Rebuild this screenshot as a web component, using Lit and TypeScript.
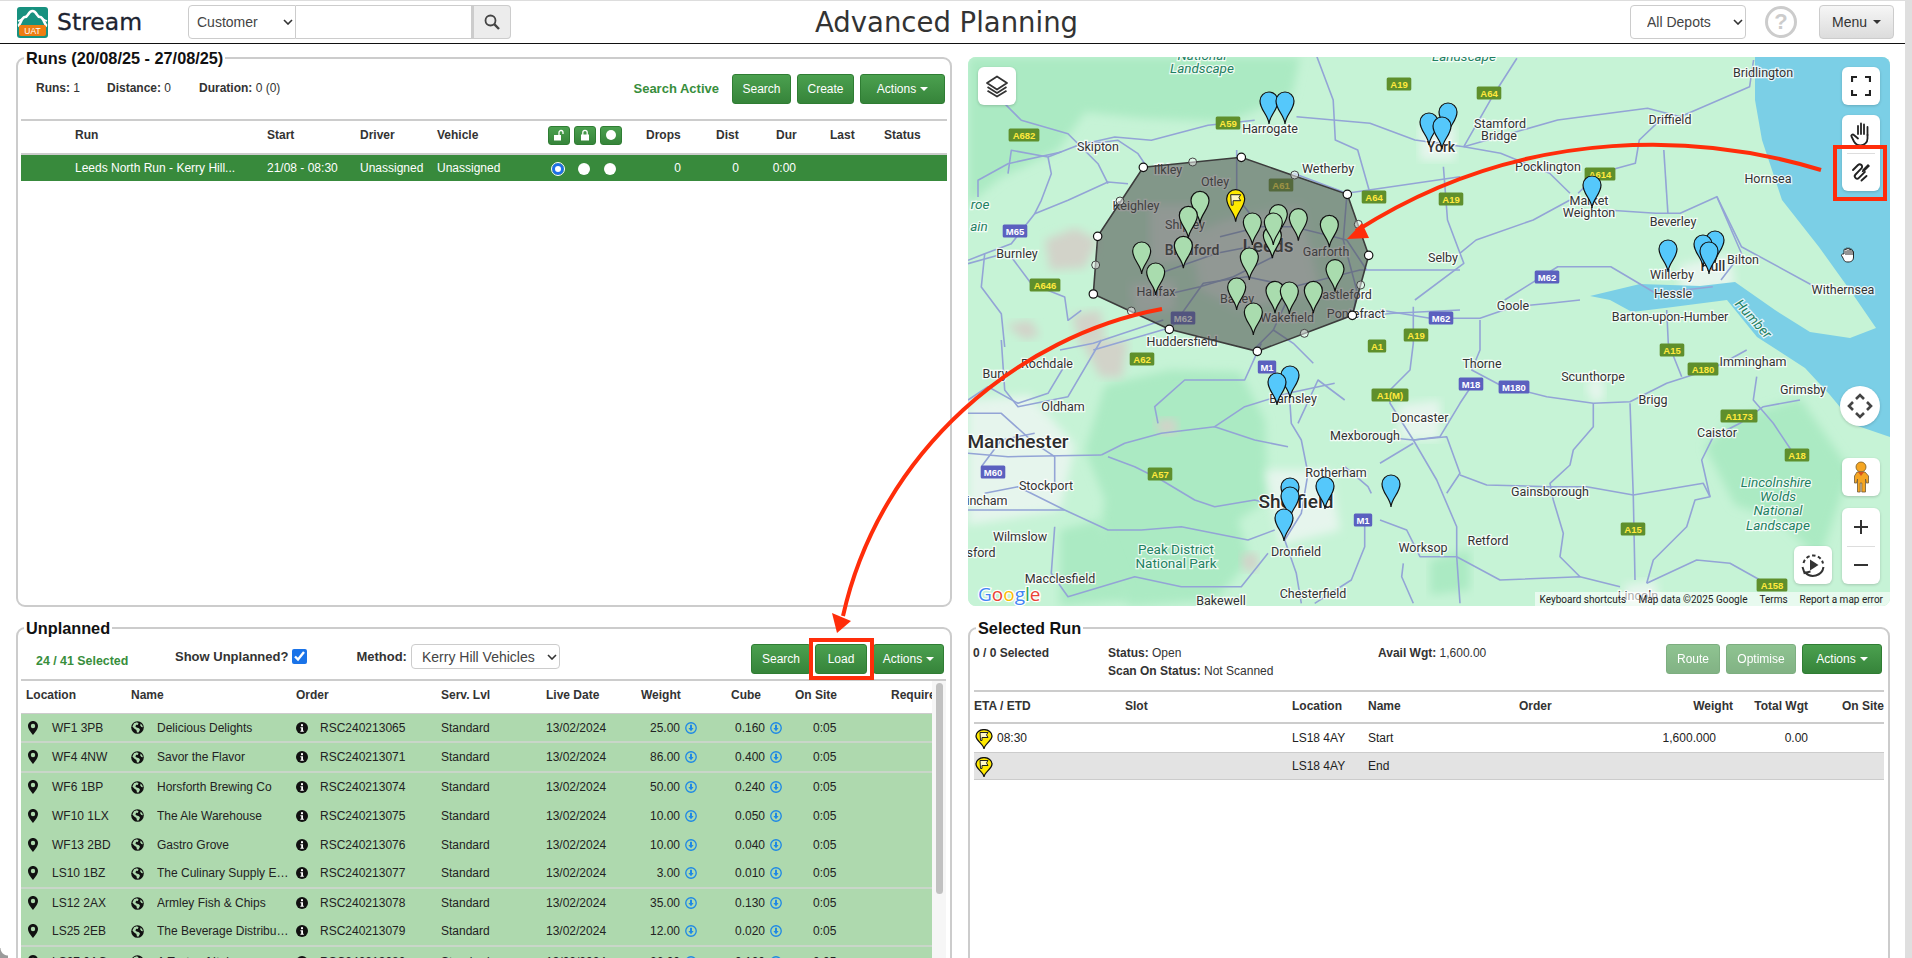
import { LitElement, html, svg, css } from "lit";
import { customElement } from "lit/decorators.js";

type Pt = [number, number];
const z = (ox: number, oy: number, sx: number, sy: number, pts: Pt[]) =>
  pts.map(([x, y]) => `${(ox + x / sx).toFixed(1)},${(oy + y / sy).toFixed(1)}`).join(" ");
const z3 = (p: Pt[]) => z(1272, 0, 2.45, 3, p);
const z7 = (p: Pt[]) => z(1060, 130, 3, 3, p);
const z9 = (p: Pt[]) => z(968, 340, 3, 3, p);
const z10 = (p: Pt[]) => z(1380, 300, 3, 3, p);
const z12 = (p: Pt[]) => z(968, 57, 3, 3, p);

const ROADS: string[] = [
  ...([
    [[0,30],[150,55],[300,55],[400,20],[510,10],[600,0]],
    [[300,60],[300,150],[275,210],[360,255],[500,290],[640,310],[750,305],[860,250],[1000,205],[1100,150]],
    [[640,310],[640,380],[580,450],[570,495],[510,550],[520,600],[550,700],[540,770],[600,830]],
    [[750,310],[760,590],[765,840]],
    [[240,525],[320,555],[510,560],[620,560],[760,585],[970,550],[990,590],[945,600],[920,680],[820,780],[800,850]],
    [[0,410],[100,420],[180,410],[240,310],[280,250]],
    [[100,420],[170,540],[230,680],[230,770],[240,910]],
    [[0,490],[100,430]],
    [[100,420],[200,410],[240,520],[200,580]],
    [[0,660],[80,690],[120,770],[230,770],[360,840],[600,830],[720,860]],
    [[70,790],[65,830],[100,910]],
    [[800,850],[950,780],[1050,790],[1140,840]],
    [[1260,300],[1150,320],[1080,370],[1000,410],[965,480],[990,590]],
    [[1130,230],[1120,300],[1180,370],[1240,460]],
    [[860,30],[865,130],[905,230]],
    [[100,20],[100,130],[90,210],[30,270],[30,310],[100,420]],
  ] as Pt[][]).map(z10),
  ...([
    [[0,180],[60,140],[150,190],[240,160],[300,60]],
    [[400,345],[470,310],[580,280],[660,270],[740,260],[860,300],[960,320]],
    [[420,350],[500,380],[580,420],[680,480],[740,500],[860,480],[900,490]],
    [[0,340],[120,350],[400,345]],
    [[0,510],[290,510],[420,570],[520,570],[640,560],[840,600],[920,570]],
    [[260,560],[250,700],[300,770],[400,740],[500,710],[640,740],[820,740],[900,640]],
    [[740,260],[830,200],[960,160],[1100,130]],
    [[960,100],[970,250],[1000,300],[1020,400]],
    [[990,250],[1050,120],[1130,180]],
    [[1130,380],[1200,440],[1210,460]],
    [[1190,540],[1190,620],[1150,720],[1040,790]],
    [[880,10],[830,120],[650,120],[560,200],[570,250]],
    [[0,220],[100,220],[200,310],[260,350],[260,440]],
    [[40,380],[100,300],[200,280]],
    [[50,460],[150,440],[290,510]],
    [[100,0],[110,150],[150,200],[300,170],[400,0]],
    [[1020,400],[1000,520],[950,600],[985,700],[1000,790]],
  ] as Pt[][]).map(z9),
  ...([
    [[100,130],[160,190],[300,230],[390,320],[420,380]],
    [[120,350],[130,280],[240,300],[330,265],[440,240],[550,250],[720,205],[860,190]],
    [[30,420],[30,370],[120,320],[280,285]],
    [[240,300],[250,350],[220,430],[200,470],[300,430],[420,375],[480,380]],
    [[200,470],[130,560],[50,590],[0,610]],
    [[0,620],[90,595]],
    [[50,590],[40,690],[100,770],[110,870]],
    [[130,600],[190,680],[290,720],[300,790],[340,760]],
    [[330,265],[450,250],[510,290],[530,320]],
  ] as Pt[][]).map(z12),
  ...([
    [[110,170],[150,300],[155,420],[210,450],[240,580]],
    [[60,350],[240,370],[350,420],[470,440],[700,360],[920,325],[1000,350]],
    [[470,440],[540,290],[600,175]],
    [[470,440],[560,460],[680,520],[730,580]],
    [[420,500],[430,660],[470,790],[350,900]],
    [[1000,350],[1170,260],[1180,180]],
    [[960,350],[900,420],[890,490],[800,520],[750,580]],
    [[820,630],[940,640],[1000,640],[1090,590],[1150,740],[1330,860]],
    [[960,450],[970,640]],
    [[730,600],[640,660],[500,720],[460,760]],
    [[570,900],[700,800],[830,800],[940,880],[1080,860]],
    [[1090,590],[1150,760],[1100,840]],
  ] as Pt[][]).map(z3),
  ...([
    [[480,320],[600,290],[700,290],[860,330],[920,420]],
    [[300,430],[470,370],[570,350]],
    [[640,380],[520,440],[420,470],[290,500]],
    [[860,200],[850,330],[890,480],[880,560]],
    [[530,60],[530,200],[600,290]],
    [[330,600],[430,460],[560,440],[700,470],[900,420],[1200,420]],
    [[100,660],[340,590]],
    [[580,660],[640,600],[700,640],[760,700]],
    [[700,470],[640,600]],
    [[880,560],[1000,550],[1200,540]],
    [[0,660],[100,640],[310,570]],
    [[700,130],[860,190],[1200,140]],
  ] as Pt[][]).map(z7),
];

const FOREST: string[] = [
  "968,57 1300,57 1292,95 1228,122 1140,118 1085,112 1058,150 1000,178 968,205",
  "1105,385 1170,370 1240,372 1265,420 1268,500 1238,520 1250,560 1215,600 1130,606 1095,560 1105,500 1085,450",
  "1705,447 1730,420 1800,398 1850,470 1820,560 1780,520 1735,505",
  "1060,530 1100,520 1130,600 1060,606",
  "1430,560 1470,550 1470,590 1430,595",
];
const URBAN: string[] = [
  "968,400 1030,395 1075,445 1060,510 968,525",
  "1225,220 1300,205 1320,290 1240,310 1200,290 1190,235",
  "1150,205 1195,205 1195,260 1150,265",
  "1130,285 1175,280 1175,310 1135,315",
  "1265,470 1330,470 1340,530 1280,545",
  "1420,125 1455,125 1455,160 1420,160",
  "1680,265 1730,255 1735,285 1680,295",
  "1398,405 1440,400 1440,440 1400,440",
  "1600,375 1605,395 1595,405 1585,385",
  "1625,585 1655,580 1660,606 1625,606",
];
const MOOR: string[] = [
  "1045,240 1075,228 1098,240 1085,268 1050,270",
  "1006,325 1030,320 1040,335 1025,340",
  "1072,315 1100,310 1105,340 1080,345",
  "1081,340 1128,340 1122,378 1100,377",
  "1155,420 1175,418 1178,433 1160,435",
  "1240,555 1258,552 1258,570 1245,572",
];

const LABELS: [string, number, number, string?][] = [
  ["Skipton",1098,146],["Ilkley",1168,169],["Otley",1215,181],["Keighley",1136,205],["Shipley",1185,224],
  ["Bradford",1192,250,"m"],["Burnley",1017,253],["Halifax",1156,291],["Harrogate",1270,128],["Leeds",1268,247,"b"],
  ["Wetherby",1328,168],["Garforth",1326,251],["Batley",1237,298],["Wakefield",1287,317],["Castleford",1343,294],
  ["Pontefract",1356,313],["Huddersfield",1182,341],["Selby",1443,257],["York",1441,147,"m"],["Stamford",1500,123],
  ["Bridge",1499,135],["Driffield",1670,119],["Bridlington",1763,72],["Pocklington",1548,166],["Market",1589,200],
  ["Weighton",1589,212],["Hornsea",1768,178],["Beverley",1673,221],["Bilton",1743,259],["Hull",1713,266,"m"],
  ["Willerby",1672,274],["Hessle",1673,293],["Withernsea",1843,289],["Barton-upon-Humber",1670,316],["Goole",1513,305],
  ["Thorne",1482,363],["Scunthorpe",1593,376],["Immingham",1753,361],["Brigg",1653,399],["Grimsby",1803,389],
  ["Caistor",1717,432],["Doncaster",1420,417],["Gainsborough",1550,491],["Worksop",1423,547],["Retford",1488,540],
  ["Lincoln",1638,595],["Rochdale",1047,363],["Bury",995,373],["Oldham",1063,406],["Manchester",1018,443,"b"],
  ["Stockport",1046,485],["incham",987,500],["Wilmslow",1020,536],["sford",981,552],["Macclesfield",1060,578],
  ["Barnsley",1293,398],["Mexborough",1365,435],["Rotherham",1336,472],["Sheffield",1296,503,"b"],["Dronfield",1296,551],
  ["Chesterfield",1313,593],["Bakewell",1221,600],
];
const PARKS: [string, number, number, string][] = [
  ["Peak District",1176,549,"park"],["National Park",1176,563,"park"],
  ["Landscape",1202,68,"parki"],["National",1202,55,"parki"],["Landscape",1464,56,"parki"],
  ["Lincolnshire",1776,482,"parki"],["Wolds",1778,496,"parki"],["National",1778,510,"parki"],["Landscape",1778,525,"parki"],
  ["roe",980,204,"parki"],["ain",979,226,"parki"],
];
const SHIELDS: [string, number, number][] = [
  ["A682",1024,135],["A59",1228,123],["A646",1045,285],["M65",1015,231],["A61",1281,185],["A64",1374,197],
  ["A19",1451,199],["M62",1183,318],["A62",1142,359],["M62",1441,318],["A19",1416,335],["A1",1377,346],["M1",1267,367],
  ["A19",1399,84],["A64",1489,93],["A614",1600,174],["M62",1547,277],["A57",1160,474],["M60",993,472],["M1",1363,520],
  ["A1(M)",1390,395],["M18",1471,384],["M180",1514,387],["A15",1672,350],["A180",1703,369],["A1173",1739,416],
  ["A18",1797,455],["A15",1633,529],["A158",1772,585],
];
const POLY: Pt[] = [[250,112],[544,82],[862,193],[926,376],[877,556],[592,664],[328,598],[100,492],[113,319]];
const MID: Pt[] = [[398,96],[704,135],[895,283],[902,465],[733,610],[214,543],[107,405],[180,213]];
const GREEN: Pt[] = [[420,280],[385,325],[370,415],[245,432],[287,495],[577,345],[655,320],[715,332],[637,385],[640,345],[808,352],[568,450],[825,485],[530,540],[645,550],[688,552],[760,550],[580,615]];
const BLUE: Pt[] = [[1269,124],[1285,124],[1290,398],[1277,405],[1290,510],[1290,519],[1284,541],[1325,509],[1391,507],[1429,145],[1448,135],[1442,149],[1592,208],[1668,272],[1715,263],[1703,267],[1709,274]];

const pinShape = (x: number, y: number, cls: string) =>
  svg`<path class=${cls} transform="translate(${x} ${y})" d="M0 0C-.6-9-9-14-9-23A9 9 0 1 1 9-23C9-14 .6-9 0 0Z"/>`;

const mapPinIcon = html`<svg class="ic" width="10" height="14" viewBox="0 0 10 14"><path fill="#111" fill-rule="evenodd" d="M5 0C2.2 0 0 2.2 0 5c0 3.5 5 9 5 9s5-5.5 5-9C10 2.2 7.8 0 5 0zm0 7.2a2.2 2.2 0 1 1 0-4.4 2.2 2.2 0 0 1 0 4.4z"/></svg>`;
const globeIcon = html`<svg class="ic" width="13" height="13" viewBox="0 0 13 13"><circle cx="6.5" cy="6.5" r="6.3" fill="#111"/><path fill="#aed9ae" d="M3 2.2 6 1.2l1.6 1.2L6.6 4 5.2 3.8 4.4 5.4 5.6 6.6 8 7.2 9 8.8 7.6 11.4 6 11.6 5.4 9 3.2 7.6 1.4 5.4ZM9.6 2.6l1.6 1.6.8 2-1.6-.2-1.2-1.6Z"/></svg>`;
const infoIcon = html`<svg class="ic" width="12" height="12" viewBox="0 0 12 12"><circle cx="6" cy="6" r="6" fill="#111"/><rect x="5" y="2.2" width="2" height="2" fill="#fff"/><path fill="#fff" d="M4.4 5.2H7v3.6h.8v1H4.4v-1h.8V6.2h-.8Z"/></svg>`;
const dlIcon = html`<svg class="ic" width="12" height="12" viewBox="0 0 11 11"><circle cx="5.5" cy="5.5" r="4.8" fill="none" stroke="#1e88e5" stroke-width="1.2"/><path fill="#1e88e5" d="M4.6 2.6h1.8v3h1.5L5.5 8.4 3.1 5.6h1.5Z"/></svg>`;
const chevron = html`<svg class="chev" width="10" height="6" viewBox="0 0 10 6"><path d="M1 1l4 4 4-4" fill="none" stroke="#333" stroke-width="1.6"/></svg>`;
const yellowPin = html`<svg class="ypin" width="18" height="21" viewBox="0 0 18 21"><path fill="#ffe900" stroke="#111" stroke-width="1.3" d="M9 20C8.6 15 1 12 1 7A8 6.4 0 0 1 17 7C17 12 9.4 15 9 20Z"/><path fill="#fff8c8" stroke="#222" d="M5 3.5h8l-1.5 2.4L13 8.5H7V11.5H5.5Z"/></svg>`;

const UNPLANNED: [string, string, string, string, string, number, boolean][] = [
  ["WF1 3PB","Delicious Delights","RSC240213065","25.00","0.160",29,true],
  ["WF4 4NW","Savor the Flavor","RSC240213071","86.00","0.400",30,true],
  ["WF6 1BP","Horsforth Brewing Co","RSC240213074","50.00","0.240",28,false],
  ["WF10 1LX","The Ale Warehouse","RSC240213075","10.00","0.050",29,false],
  ["WF13 2BD","Gastro Grove","RSC240213076","10.00","0.040",29,false],
  ["LS10 1BZ","The Culinary Supply Emporium","RSC240213077","3.00","0.010",30,true],
  ["LS12 2AX","Armley Fish & Chips","RSC240213078","35.00","0.130",28,false],
  ["LS25 2EB","The Beverage Distributors","RSC240213079","12.00","0.020",30,true],
  ["LS27 0AG","A Taste of Italy","RSC240213080","26.00","0.100",29,false],
];

@customElement("app-root")
export class AppRoot extends LitElement {
  static styles = css`
    :host { display: block; position: relative; width: 1912px; height: 958px; overflow: hidden; background: #fff;
      font-family: "Liberation Sans", Arial, sans-serif; font-size: 12px; color: #333; }
    * { box-sizing: border-box; }
    .page { width: 1905px; height: 958px; border-top: 1px solid #ddd; }
    .pagebar { position: absolute; right: 0; top: 0; width: 7px; height: 958px; background: #dfdfdf; }
    .corner { position: absolute; left: 0; bottom: 0; width: 8px; height: 10px; background: radial-gradient(circle at 100% 0, transparent 7px, #9a9a9a 8px); }

    .top { height: 43px; border-bottom: 1px solid #111; display: flex; align-items: center; position: relative; }
    .left { width: 815px; display: flex; align-items: center; flex: none; padding-left: 17px; }
    .logo { width: 31px; height: 31px; flex: none; display: block; }
    .brand { font-family: "DejaVu Sans", sans-serif; font-size: 23.5px; color: #1c2330; margin-left: 9px; width: 131px; flex: none; -webkit-text-stroke: .3px #1c2330; }
    .sel { position: relative; display: flex; }
    .sel select { appearance: none; -webkit-appearance: none; background: #fff; border: 1px solid #ccc; font: 14px "Liberation Sans", Arial, sans-serif; color: #444; width: 100%; height: 100%; outline: none; }
    .chev { position: absolute; right: 3px; top: 50%; margin-top: -3px; pointer-events: none; }
    .cust { width: 108px; height: 34px; }
    .cust select { border-radius: 4px 0 0 4px; padding-left: 8px; }
    .q { width: 176px; height: 34px; border: 1px solid #ccc; border-left: 0; background: #fff; }
    .qb { width: 39px; height: 34px; background: #ececec; border: 1px solid #ccc; border-left: 2px solid #ccc; border-radius: 0 4px 4px 0; display: flex; align-items: center; justify-content: center; }
    .title { font-family: "DejaVu Sans", sans-serif; font-size: 27.5px; color: #333; white-space: nowrap; }
    .right { margin-left: auto; display: flex; align-items: center; padding-right: 11px; }
    .dep { width: 116px; height: 34px; }
    .dep select { border-radius: 4px; padding-left: 16px; }
    .help { width: 32px; height: 32px; border: 3px solid #ccc; border-radius: 50%; color: #ccc; font-size: 22px; font-weight: bold; display: flex; align-items: center; justify-content: center; margin: 0 22px 0 19px; }
    .menu { width: 75px; height: 34px; border: 1px solid #ccc; border-radius: 4px; background: linear-gradient(#f6f6f6, #dcdcdc); font-size: 14px; color: #333; display: flex; align-items: center; justify-content: center; gap: 6px; }
    .caret { display: inline-block; border-top: 4px solid currentColor; border-left: 4px solid transparent; border-right: 4px solid transparent; }

    .grid { display: grid; grid-template-columns: 936px 922px; column-gap: 16px; grid-template-rows: 558px 400px; row-gap: 12px; padding: 5px 0 0 16px; }
    fieldset { margin: 0; padding: 0; min-width: 0; border: 2px solid #ccc; border-radius: 9px; height: 100%; display: block; }
    legend { font-size: 16.3px; font-weight: bold; color: #111; padding: 0 2px; margin-left: 6px; line-height: 18px; }
    .map { margin-top: 8px; height: 549px; position: relative; border-radius: 8px; overflow: hidden; background: #c6f3d6; }
    .map > svg.m { display: block; width: 922px; height: 549px; }

    .bar { display: flex; align-items: center; height: 30px; margin-top: 7px; padding-left: 18px; padding-right: 5px; }
    .stat { flex: none; margin-top: -2px; }
    .stat b { color: #333; }
    .s1 { width: 71px; } .s2 { width: 92px; }
    .act { margin-left: auto; display: flex; align-items: center; gap: 6px; }
    .active { color: #388e3c; font-weight: bold; font-size: 13px; margin-right: 7px; margin-top: -2px; }
    .btn { height: 30px; border: 1px solid #2f7d33; border-radius: 3px; background: linear-gradient(#4ba04f, #36843a); color: #fff; font-size: 12px; display: inline-flex; align-items: center; justify-content: center; gap: 4px; flex: none; }
    .btn.off { opacity: .62; }
    .w59 { width: 59px; } .w57 { width: 57px; } .w85 { width: 85px; } .w60 { width: 60px; } .w52 { width: 52px; } .w71 { width: 71px; }
    .w54 { width: 54px; } .w70 { width: 70px; } .w80 { width: 80px; }

    .tbl { margin: 15px 3px 0; border-top: 2px solid #ccc; }
    .hr { display: grid; height: 32px; align-items: center; font-weight: bold; color: #333; padding-bottom: 4px; border-bottom: 2px solid #ccc; }
    .runs { grid-template-columns: 54px 192px 93px 77px 111px 98px 70px 60px 54px 54px 1fr; height: 34px; }
    .rr { display: grid; grid-template-columns: 54px 192px 93px 77px 111px 98px 35px 58px 57px 1fr; height: 26px; align-items: center; background: #388a3c; color: #fff; }
    .rr .n { text-align: right; }
    .locks { display: flex; gap: 4px; }
    .lk { width: 22px; height: 19px; border-radius: 3px; background: linear-gradient(#4ba04f, #36843a); border: 1px solid #2f7d33; display: flex; align-items: center; justify-content: center; flex: none; }
    .radios { display: flex; gap: 14px; padding-left: 4px; padding-top: 2px; }
    .radio { width: 12px; height: 12px; border-radius: 50%; background: #fff; flex: none; }
    .radio.on { background: #fff; border: 3px solid #1d6fe8; outline: 1px solid #fff; }

    .ubar { display: flex; align-items: center; height: 30px; margin-top: 7px; padding-left: 18px; padding-right: 6px; }
    .sel-count { color: #388e3c; font-weight: bold; font-size: 12.4px; width: 139px; flex: none; padding-top: 3px; }
    .lab { font-weight: bold; font-size: 13px; color: #333; flex: none; margin-top: -6px; }
    .chk { width: 15px; height: 15px; margin: -6px 49px 0 4px; accent-color: #1a73e8; flex: none; }
    .meth { width: 149px; height: 25px; margin-left: 4px; align-self: flex-start; }
    .meth select { border-radius: 4px; padding-left: 10px; }
    .act.u { gap: 4px; }
    .act.u .w71 { margin-left: 2px; }

    .utbl { margin: 5px 4px 0 3px; border-top: 2px solid #ccc; position: relative; height: 360px; overflow: hidden; }
    .uhead { width: 911px; display: grid; grid-template-columns: 105px 165px 145px 105px 95px 90px 64px 96px 41px; height: 32px; align-items: center; font-weight: bold; white-space: nowrap; overflow: hidden; padding: 0 0 4px 5px; }
    .uline { width: 911px; height: 1px; background: #ccc; }
    .ur { width: 911px; display: grid; grid-template-columns: 31px 79px 26px 139px 24px 121px 105px 94px 40px 51px 34px 48px 1fr; align-items: center; background: #aed9ae; color: #222; white-space: nowrap; }
    .ur.sep { border-bottom: 2px solid #c9d6c9; }
    .ur .pad { padding-left: 7px; }
    .ur .r { text-align: right; }
    .ur .i { padding-left: 5px; display: flex; }
    .nm { overflow: hidden; text-overflow: ellipsis; padding-right: 6px; }
    .ic { display: block; }
    .scroll { position: absolute; left: 911px; top: 0; width: 14px; height: 360px; background: #f6f6f6; }
    .thumb { margin: 2px 0 0 4px; width: 7px; height: 211px; background: #c1c1c1; border-radius: 4px; }

    .sbar { display: flex; height: 46px; position: relative; padding: 0 4px 0 3px; }
    .sinfo { line-height: 18px; padding-top: 7px; }
    .sinfo b { color: #333; }
    .c1 { width: 135px; } .c2 { width: 270px; }
    .act.s { margin-left: auto; padding-top: 7px; align-self: flex-start; gap: 6px; padding-right: 2px; }
    .sline { margin: 7px 4px 0; border-top: 2px solid #ccc; }
    .st { display: grid; grid-template-columns: 151px 167px 76px 151px 121px 93px 75px 76px; align-items: center; height: 32px; font-weight: bold; }
    .sth { border-bottom: 2px solid #ccc; height: 32px; padding-bottom: 3px; }
    .st .r { text-align: right; }
    .sr { font-weight: normal; height: 28px; color: #222; }
    .sr.g { background: #e3e3e3; border-top: 1px solid #ccc; border-bottom: 1px solid #ccc; height: 28px; }
    .eta { display: flex; align-items: center; gap: 4px; margin-left: 1px; }
    .ypin { margin-top: 3px; }
    .pr { padding-right: 17px; }

    .mbtn { position: absolute; background: #fff; border-radius: 6px; box-shadow: 0 1px 3px rgba(0,0,0,.18); width: 38px; display: flex; align-items: center; justify-content: center; }
    .layers { left: 10px; top: 10px; height: 38px; }
    .fs { right: 10px; top: 10px; height: 38px; }
    .tools { right: 10px; top: 58px; height: 76px; flex-direction: column; }
    .tool { height: 38px; display: flex; align-items: center; justify-content: center; width: 100%; }
    .dv { width: 28px; height: 1px; background: #ddd; flex: none; }
    .compass { right: 10px; top: 329px; width: 40px; height: 40px; border-radius: 50%; }
    .peg { right: 10px; top: 401px; height: 38px; }
    .zoom { right: 10px; top: 451px; height: 76px; flex-direction: column; }
    .replay { right: 58px; top: 489px; height: 38px; }
    .attr { position: absolute; right: 0; bottom: 0; height: 14px; background: rgba(255,255,255,.6); display: flex; align-items: center; font: 10px Roboto, sans-serif; color: #222; padding: 0 7px 0 5px; white-space: nowrap; }
    .attr span:nth-child(1) { width: 99px; } .attr span:nth-child(2) { width: 121px; } .attr span:nth-child(3) { width: 40px; }

    .road { fill: none; stroke: #93a4d6; stroke-width: 1.6; stroke-linejoin: round; }
    .lbl { font: 12.5px Roboto, sans-serif; fill: #333; text-anchor: middle; paint-order: stroke; stroke: rgba(255,255,255,.8); stroke-width: 2.5px; }
    .lbl.m { font-size: 14px; font-weight: 500; }
    .lbl.b { font-size: 19px; font-weight: 500; fill: #2c2c2c; }
    .lbl.park { fill: #1f8062; font-size: 13.5px; }
    .lbl.parki { fill: #1f8062; font-size: 13.5px; font-style: italic; }
    .shield { font: bold 9.5px "Liberation Sans", sans-serif; text-anchor: middle; }
    .pg { fill: #a9dcae; stroke: #111; stroke-width: 1.2; }
    .pb { fill: #55c8fb; stroke: #111; stroke-width: 1.2; }
    .py { fill: #ffe900; stroke: #111; stroke-width: 1.2; }
    .overlay { position: absolute; left: 0; top: 0; width: 1912px; height: 958px; pointer-events: none; }
  `;

  private mapSvg() {
    return html`<svg class="m" viewBox="968 57 922 549">
      <defs><filter id="soft" x="-10%" y="-10%" width="120%" height="120%"><feGaussianBlur stdDeviation="5"/></filter></defs>
      <rect x="968" y="57" width="922" height="549" fill="#c6f3d6"/>
      ${FOREST.map((p) => svg`<polygon points=${p} fill="#abeac3" filter="url(#soft)"/>`)}
      ${URBAN.map((p) => svg`<polygon points=${p} fill="#edf6f2" fill-opacity=".8" filter="url(#soft)"/>`)}
      ${MOOR.map((p) => svg`<polygon points=${p} fill="#d2d3c9" filter="url(#soft)"/>`)}
      <polygon fill="#7bcfe6" points="1755,57 1890,57 1890,437 1855,425 1830,395 1805,368 1757,337 1727,300 1665,308 1632,312 1610,300 1590,296 1640,284 1700,286 1735,282 1775,310 1810,332 1850,338 1876,328 1852,293 1819,247 1782,200 1762,140 1755,100"/>
      ${ROADS.map((p) => svg`<polyline class="road" points=${p}/>`)}
      <text class="lbl parki" transform="translate(1750 322) rotate(48)" stroke="none">Humber</text>
      ${SHIELDS.map(([t, x, y]) => {
        const mw = t[0] === "M";
        const w = t.length * 6.2 + 6;
        return svg`<rect x=${x - w / 2} y=${y - 6.5} width=${w} height="13" rx="1.5" fill=${mw ? "#5b60bf" : "#5f8f2c"}/><text class="shield" x=${x} y=${y + 3.5} fill=${mw ? "#fff" : "#ffe93e"}>${t}</text>`;
      })}
      ${LABELS.map(([t, x, y, c]) => svg`<text class="lbl ${c ?? ""}" x=${x} y=${y + 4.5}>${t}</text>`)}
      ${PARKS.map(([t, x, y, c]) => svg`<text class="lbl ${c}" x=${x} y=${y + 4.5}>${t}</text>`)}
      <polygon points=${z7(POLY)} fill="#4a4a4a" fill-opacity=".55" stroke="#3c3c3c" stroke-width="1.6"/>
      ${MID.map(([x, y]) => svg`<circle cx=${1060 + x / 3} cy=${130 + y / 3} r="4" fill="#fff" fill-opacity=".5" stroke="#444"/>`)}
      ${POLY.map(([x, y]) => svg`<circle cx=${1060 + x / 3} cy=${130 + y / 3} r="4.2" fill="#fff" stroke="#111" stroke-width="1.2"/>`)}
      ${GREEN.map(([x, y]) => pinShape(1060 + x / 3, 130 + y / 3, "pg"))}
      ${pinShape(1060 + 527 / 3, 130 + 275 / 3, "py")}
      <path transform="translate(1235.7 221.7)" fill="#fff6c4" stroke="#222" d="M-5-27H5L3.2-24 5-21H-2.6V-16.5H-4.4Z"/>
      ${BLUE.map(([x, y]) => pinShape(x, y, "pb"))}
      <text x="978" y="601" font-family="Open Sans, sans-serif" font-size="19" paint-order="stroke" stroke="#fff" stroke-width="2.5"><tspan fill="#4285f4">G</tspan><tspan fill="#ea4335">o</tspan><tspan fill="#fbbc05">o</tspan><tspan fill="#4285f4">g</tspan><tspan fill="#34a853">l</tspan><tspan fill="#ea4335">e</tspan></text>
      <g transform="translate(1849 255)" stroke="#111" stroke-width=".9" stroke-linejoin="round" fill="#fff">
        <path d="M-5-1V-5a1 1 0 0 1 2 0V-6a1 1 0 0 1 2 0 1 1 0 0 1 2 0V-5a1 1 0 0 1 2 0V-4a1 1 0 0 1 1.5 .5V2C4.500 5 3 7-1 7S-5 5-6 3L-7.500 .5C-8 -.5-6-1.500-5-1Z"/>
        <path fill="none" d="M-3-4.500V0M-1-5.500V0M1-5.500V0M3-4V0"/>
      </g>
    </svg>`;
  }

  private mapControls() {
    return html`
      <div class="mbtn layers"><svg width="24" height="24" viewBox="0 0 24 24" fill="none" stroke="#333" stroke-width="1.8" stroke-linejoin="round"><path d="M12 2.500 22 9l-10 6.500L2 9Z"/><path d="M2.500 13 12 19l9.500-6"/><path d="M2.500 16.800 12 22.500l9.500-5.700"/></svg></div>
      <div class="mbtn fs"><svg width="20" height="20" viewBox="0 0 20 20" fill="none" stroke="#222" stroke-width="2.2"><path d="M1 6V1H6M14 1H19V6M19 14V19H14M6 19H1V14"/></svg></div>
      <div class="mbtn tools">
        <div class="tool"><svg width="24" height="26" viewBox="0 0 24 26" fill="none" stroke="#222" stroke-width="1.8" stroke-linecap="round" stroke-linejoin="round"><path d="M9 13V5M12 13V2.500M15 13V3.500M18.500 14V6"/><path d="M18.500 14v3.500a7 7 0 0 1-7 7c-3.200 0-5-1.400-6.500-4L2.500 15.500c-.8-1.400 1.200-2.700 2.400-1.500L9 17.500"/></svg></div>
        <div class="dv"></div>
        <div class="tool"><svg width="24" height="24" viewBox="0 0 24 24" fill="none" stroke="#222" stroke-width="1.900" stroke-linecap="round"><path d="M4 10 9 5a2.400 2.400 0 0 1 3.400 3.400L6.500 14.500a2.400 2.400 0 0 0 3.400 3.400l6-6"/><path d="M12.500 20.500 17.500 16"/><path fill="#222" stroke="none" d="M13.500 9.500 19 4l2 2-5.500 5.500-2.800.8Z"/></svg></div>
      </div>
      <div class="mbtn compass"><svg width="26" height="26" viewBox="0 0 26 26" fill="none" stroke="#444" stroke-width="2.600"><path d="M9 6l4-4 4 4M9 20l4 4 4-4M6 9l-4 4 4 4M20 9l4 4-4 4"/></svg></div>
      <div class="mbtn peg"><svg width="18" height="32" viewBox="0 0 18 32"><circle cx="9" cy="6" r="5" fill="#f5a623" stroke="#7a5a20" stroke-width=".8"/><path fill="#f5a623" stroke="#6d5a3a" stroke-width=".8" d="M5 11h8l3.500 4v7h-2.200l-.8-4v13H9.800v-9H8.200v9H5.500V18l-.8 4H2.500v-7Z"/><path fill="#d9541e" d="M6 11h6l-3 4Z"/></svg></div>
      <div class="mbtn zoom">
        <div class="tool"><svg width="16" height="16" viewBox="0 0 16 16"><path d="M8 1v14M1 8h14" stroke="#333" stroke-width="2"/></svg></div>
        <div class="dv"></div>
        <div class="tool"><svg width="16" height="16" viewBox="0 0 16 16"><path d="M1 8h14" stroke="#333" stroke-width="2"/></svg></div>
      </div>
      <div class="mbtn replay"><svg width="26" height="26" viewBox="0 0 26 26" fill="none" stroke="#333" stroke-width="2"><path d="M3.500 11A10 10 0 0 1 23 11.500" stroke-dasharray="3.500 2.500"/><path d="M23.500 15A10.500 10.500 0 0 1 5 20"/><path d="M2.500 15 4.500 21 10.500 19.500" /><path fill="#333" stroke="none" d="M10 7.500 18.500 13 10 18.500Z"/></svg></div>
      <div class="attr"><span>Keyboard shortcuts</span><span>Map data ©2025 Google</span><span>Terms</span><span>Report a map error</span></div>
    `;
  }

  render() {
    return html`
      <div class="page">
        <div class="top">
          <div class="left">
            <svg class="logo" viewBox="0 0 31 31">
              <rect width="31" height="31" rx="3" fill="#17917f"/>
              <path d="M1 19c3-1 3-9 7-9 3.500 0 3-6 7.500-6 4.500 0 4 6 7.500 6 4 0 4 8 7 9" fill="none" stroke="#fff" stroke-width="2.600"/>
              <path d="M1 14c3-1 4-2 6-3M24 11c2 1 3 2 6 3" fill="none" stroke="#fff" stroke-width="1.600"/>
              <rect x="2" y="18" width="27" height="11" rx="2" fill="#ee7d11"/>
              <text x="15.500" y="26.800" text-anchor="middle" font-family="Liberation Sans, sans-serif" font-size="8.500" fill="#fff">UAT</text>
            </svg>
            <div class="brand">Stream</div>
            <div class="sel cust"><select><option>Customer</option></select>${chevron}</div>
            <input class="q" />
            <div class="qb"><svg width="16" height="16" viewBox="0 0 16 16" fill="none" stroke="#444" stroke-width="1.800"><circle cx="6.500" cy="6.500" r="5"/><path d="M10.200 10.200 15 15" stroke-width="2.400"/></svg></div>
          </div>
          <div class="title">Advanced Planning</div>
          <div class="right">
            <div class="sel dep"><select><option>All Depots</option></select>${chevron}</div>
            <div class="help">?</div>
            <div class="menu">Menu <span class="caret"></span></div>
          </div>
        </div>
        <div class="grid">
          <fieldset>
            <legend>Runs (20/08/25 - 27/08/25)</legend>
            <div class="bar">
              <div class="stat s1"><b>Runs:</b> 1</div>
              <div class="stat s2"><b>Distance:</b> 0</div>
              <div class="stat"><b>Duration:</b> 0 (0)</div>
              <div class="act">
                <span class="active">Search Active</span>
                <span class="btn w59">Search</span>
                <span class="btn w57">Create</span>
                <span class="btn w85">Actions <span class="caret"></span></span>
              </div>
            </div>
            <div class="tbl">
              <div class="hr runs">
                <span></span><span>Run</span><span>Start</span><span>Driver</span><span>Vehicle</span>
                <span class="locks"><span class="lk"><svg width="12" height="12" viewBox="0 0 12 12"><rect x="1" y="6" width="7" height="5.500" fill="#fff"/><path d="M6 6V3.500a2 2 0 0 1 4 0V5" fill="none" stroke="#fff" stroke-width="1.300"/></svg></span><span class="lk"><svg width="12" height="12" viewBox="0 0 12 12"><rect x="2" y="5.500" width="8" height="6" fill="#fff"/><path d="M3.800 6V3.500a2.200 2.200 0 0 1 4.400 0V6" fill="none" stroke="#fff" stroke-width="1.300"/></svg></span><span class="lk"><svg width="12" height="12" viewBox="0 0 12 12"><circle cx="6" cy="6" r="5" fill="#fff"/></svg></span></span>
                <span>Drops</span><span>Dist</span><span>Dur</span><span>Last</span><span>Status</span>
              </div>
              <div class="rr">
                <span></span><span>Leeds North Run - Kerry Hill...</span><span>21/08 - 08:30</span><span>Unassigned</span><span>Unassigned</span>
                <span class="radios"><span class="radio on"></span><span class="radio"></span><span class="radio"></span></span>
                <span class="n">0</span><span class="n">0</span><span class="n">0:00</span><span></span>
              </div>
            </div>
          </fieldset>
          <div class="map">${this.mapSvg()}${this.mapControls()}</div>
          <fieldset>
            <legend>Unplanned</legend>
            <div class="ubar">
              <span class="sel-count">24 / 41 Selected</span>
              <span class="lab">Show Unplanned?</span>
              <input class="chk" type="checkbox" checked />
              <span class="lab">Method:</span>
              <div class="sel meth"><select><option>Kerry Hill Vehicles</option></select>${chevron}</div>
              <div class="act u">
                <span class="btn w60">Search</span>
                <span class="btn w52">Load</span>
                <span class="btn w71">Actions <span class="caret"></span></span>
              </div>
            </div>
            <div class="utbl">
              <div class="uhead"><span>Location</span><span>Name</span><span>Order</span><span>Serv. Lvl</span><span>Live Date</span><span>Weight</span><span>Cube</span><span>On Site</span><span>Required</span></div>
              <div class="uline"></div>
              ${UNPLANNED.map(([pc, nm, ord, wt, cb, h, sep]) => html`
                <div class="ur ${sep ? "sep" : ""}" style="height:${h}px">
                  <span class="pad">${mapPinIcon}</span><span>${pc}</span><span>${globeIcon}</span><span class="nm">${nm}</span><span>${infoIcon}</span><span>${ord}</span><span>Standard</span><span>13/02/2024</span><span class="r">${wt}</span><span class="i">${dlIcon}</span><span class="r">${cb}</span><span class="i">${dlIcon}</span><span>0:05</span>
                </div>`)}
              <div class="scroll"><div class="thumb"></div></div>
            </div>
          </fieldset>
          <fieldset>
            <legend>Selected Run</legend>
            <div class="sbar">
              <div class="sinfo c1"><b>0 / 0 Selected</b></div>
              <div class="sinfo c2"><b>Status:</b> Open<br /><b>Scan On Status:</b> Not Scanned</div>
              <div class="sinfo"><b>Avail Wgt:</b> 1,600.00</div>
              <div class="act s">
                <span class="btn off w54">Route</span>
                <span class="btn off w70">Optimise</span>
                <span class="btn w80">Actions <span class="caret"></span></span>
              </div>
            </div>
            <div class="sline">
              <div class="st sth"><span>ETA / ETD</span><span>Slot</span><span>Location</span><span>Name</span><span>Order</span><span class="r">Weight</span><span class="r">Total Wgt</span><span class="r">On Site</span></div>
              <div class="st sr"><span class="eta">${yellowPin}08:30</span><span></span><span>LS18 4AY</span><span>Start</span><span></span><span class="r pr">1,600.000</span><span class="r">0.00</span><span></span></div>
              <div class="st sr g"><span class="eta">${yellowPin}</span><span></span><span>LS18 4AY</span><span>End</span><span></span><span></span><span></span><span></span></div>
            </div>
          </fieldset>
        </div>
      </div>
      <div class="pagebar"></div>
      <div class="corner"></div>
      <svg class="overlay" viewBox="0 0 1912 958">
        <g fill="none" stroke="#ff2d0a">
          <rect x="1835" y="147" width="50" height="52" stroke-width="4"/>
          <rect x="811" y="640" width="61" height="38" stroke-width="4"/>
          <path d="M1821 170C1710 136 1530 120 1356 231" stroke-width="4"/>
          <path d="M1162 309C1020 335 880 450 843 616" stroke-width="4"/>
        </g>
        <path fill="#ff2d0a" d="M1347 239 1362 223 1369 238Z"/>
        <path fill="#ff2d0a" d="M832 613 851 621 837 633Z"/>
      </svg>
    `;
  }
}
